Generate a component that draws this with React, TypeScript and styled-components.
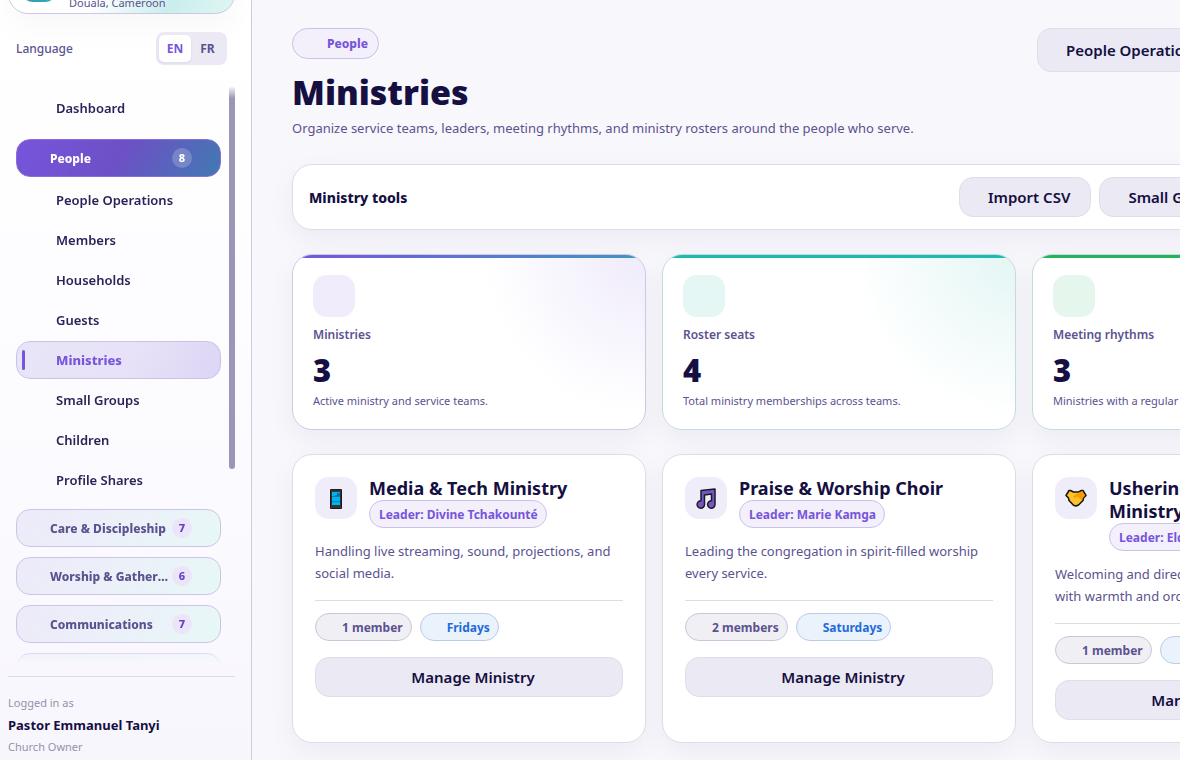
import React from "react";
import styled, { createGlobalStyle, css } from "styled-components";

const ink = "#150f42";
const body = "#5b5290";
const violet = "#7755dc";
const line = "#dfdcea";

const Global = createGlobalStyle`
  *, *::before, *::after { box-sizing: border-box; }
  body {
    margin: 0;
    background: #f8f7fc;
    color: ${ink};
    font-family: "Noto Sans", "Open Sans", sans-serif;
  }
  button { font-family: inherit; color: inherit; cursor: pointer; }
  a { color: inherit; text-decoration: none; }
  h1, h2, h3, p, ul { margin: 0; padding: 0; }
  ul { list-style: none; }
`;

const Shell = styled.div`
  display: flex;
  height: 100vh;
  overflow: hidden;
`;

/* ---------- Sidebar ---------- */

const Sidebar = styled.aside`
  flex: 0 0 252px;
  display: flex;
  flex-direction: column;
  height: 100vh;
  overflow: hidden;
  padding: 0 16px 0 8px;
  border-right: 1px solid #d0ccdd;
  background: linear-gradient(180deg, #ffffff 0%, #fdfdff 40%, #f8f6fd 100%);
`;

const Church = styled.div`
  flex: none;
  display: flex;
  align-items: center;
  gap: 12px;
  height: 80px;
  margin-top: -66px;
  padding: 0 12px;
  border: 1px solid #cdc7e2;
  border-radius: 20px;
  background: linear-gradient(120deg, #ffffff 45%, #c9eeec 75%, #e0f6f3 100%);
  box-shadow: 0 12px 28px rgba(30, 20, 80, 0.03);
`;

const ChurchMark = styled.span`
  flex: none;
  width: 36px;
  height: 56px;
  border-radius: 12px;
  background: linear-gradient(135deg, #7755dc, #1eb8ae);
`;

const ChurchText = styled.div`
  display: flex;
  flex-direction: column;
  align-self: flex-end;
  font-size: 11px;
  line-height: 16px;
  padding-bottom: 2px;
  color: ${body};
`;

const LanguageRow = styled.div`
  flex: none;
  display: flex;
  align-items: center;
  justify-content: space-between;
  margin-top: 18px;
  padding: 0 8px;
  font-size: 12px;
  font-weight: 500;
  color: ${body};
`;

const Switcher = styled.div`
  display: flex;
  padding: 3px;
  border-radius: 8px;
  background: #ece9f4;
`;

const SwitchButton = styled.button<{ $on?: boolean }>`
  width: ${(p) => (p.$on ? 32 : 33)}px;
  height: 27px;
  padding: 0;
  border: 0;
  border-radius: 5px;
  font-size: 12px;
  font-weight: 700;
  color: ${(p) => (p.$on ? violet : body)};
  background: ${(p) => (p.$on ? "#fff" : "transparent")};
  box-shadow: ${(p) => (p.$on ? "0 1px 3px rgba(30, 20, 80, 0.08)" : "none")};
`;

const NavFrame = styled.nav`
  flex: 1 1 0;
  min-height: 0;
  display: flex;
  margin-top: 21px;
  overflow: hidden;
  mask-image: linear-gradient(180deg, transparent 0, #000 12px, #000 calc(100% - 18px), transparent 100%);
`;

const NavList = styled.ul`
  flex: 1 1 0;
  min-width: 0;
  display: flex;
  flex-direction: column;
  gap: 2px;
  padding: 3px 8px 0;
`;

const Thumb = styled.div`
  flex: 0 0 6px;
  height: 383px;
  border-radius: 3px;
  background: #9b96b8;
`;

const NavLink = styled.a<{ $active?: boolean }>`
  display: flex;
  align-items: center;
  height: 38px;
  padding-left: 40px;
  border-radius: 14px;
  font-size: 13px;
  font-weight: 600;
  color: #2b2358;
  ${(p) =>
    p.$active &&
    css`
      gap: 31px;
      padding-left: 5px;
      border: 1px solid #cbc2ec;
      font-weight: 800;
      color: ${violet};
      background: linear-gradient(120deg, #e9e5f8 0%, #e7e2f7 55%, #dcd5f5 100%);
      &::before {
        content: "";
        width: 3px;
        height: 20px;
        border-radius: 2px;
        background: ${violet};
      }
    `}
`;

const GroupItem = styled.li<{ $top: number; $bottom: number }>`
  padding: ${(p) => p.$top}px 0 ${(p) => p.$bottom}px;
`;

const GroupButton = styled.button<{ $open?: boolean }>`
  display: flex;
  align-items: center;
  width: 100%;
  height: 38px;
  gap: 2px;
  padding: 0 28px 0 33px;
  border: 1px solid ${(p) => (p.$open ? "#8a6fdc" : "#cbc4e8")};
  border-radius: 14px;
  font-size: 12px;
  font-weight: 800;
  text-align: left;
  color: ${(p) => (p.$open ? "#fff" : body)};
  background: ${(p) =>
    p.$open
      ? "linear-gradient(120deg, #7755dc 0%, #6d50c6 50%, #4279b2 100%)"
      : "linear-gradient(120deg, #edeaf9 0%, #ebf1f9 55%, #e7f8f6 100%)"};
`;

const GroupName = styled.span`
  flex: 1;
  min-width: 0;
  overflow: hidden;
  white-space: nowrap;
  text-overflow: ellipsis;
`;

const Count = styled.span<{ $open?: boolean }>`
  flex: none;
  width: 20px;
  border-radius: 10px;
  font-size: 11px;
  line-height: 20px;
  text-align: center;
  color: ${(p) => (p.$open ? "#fff" : "#6443c4")};
  background: ${(p) => (p.$open ? "rgba(255, 255, 255, 0.2)" : "#ece5f9")};
`;

const Account = styled.footer`
  flex: none;
  display: flex;
  flex-direction: column;
  margin-top: 12px;
  padding: 15px 0 2px;
  border-top: 1px solid ${line};
  font-size: 11px;
  line-height: 22px;
  color: #9691ac;
  strong {
    font-size: 13px;
    font-weight: 700;
    color: ${ink};
  }
`;

/* ---------- Main ---------- */

const Main = styled.main`
  flex: 1 0 1174px;
  padding: 28px 40px;
`;

const Header = styled.header`
  display: flex;
  justify-content: space-between;
  align-items: flex-start;
  margin-bottom: 25px;
`;

const Actions = styled.div<{ $basis: number }>`
  flex: 0 0 ${(p) => p.$basis}px;
  display: flex;
  gap: 8px;
`;

const Eyebrow = styled.span`
  display: inline-flex;
  align-items: center;
  height: 31px;
  padding: 0 10px 0 34px;
  border: 1px solid #cbc2ec;
  border-radius: 16px;
  font-size: 12px;
  font-weight: 800;
  color: ${violet};
  background: #f3effb;
`;

const Title = styled.h1`
  margin-top: 13px;
  font-size: 34px;
  font-weight: 900;
  line-height: 40px;
`;

const Lead = styled.p`
  margin-top: 5px;
  font-size: 13px;
  line-height: 22px;
  color: ${body};
`;

const SoftButton = styled.button<{ $tall?: boolean; $wide?: boolean }>`
  display: flex;
  align-items: center;
  justify-content: center;
  width: ${(p) => (p.$wide ? "100%" : "auto")};
  height: ${(p) => (p.$tall ? 44 : 40)}px;
  padding: 0 20px 0 28px;
  border: 1px solid #e0dde9;
  border-radius: 14px;
  font-size: 15px;
  font-weight: 600;
  white-space: nowrap;
  background: #ebe9f3;
`;

const panel = css`
  border: 1px solid ${line};
  border-radius: 20px;
  background: #fff;
  box-shadow: 0 10px 28px rgba(30, 20, 80, 0.05);
`;

const Toolbar = styled.section`
  ${panel}
  display: flex;
  align-items: center;
  justify-content: space-between;
  margin-bottom: 24px;
  padding: 12px 16px;
  h2 {
    font-size: 14px;
    font-weight: 800;
  }
`;

const Grid = styled.div`
  display: grid;
  grid-template-columns: repeat(3, minmax(0, 1fr));
  gap: 16px;
  margin-bottom: 24px;
`;

const Stat = styled.section<{ $edge: string; $bar: string; $glow: string }>`
  ${panel}
  position: relative;
  overflow: hidden;
  height: 176px;
  padding: 20px;
  border-color: ${(p) => p.$edge};
  background: radial-gradient(circle at 100% 0%, ${(p) => p.$glow} 0%, #fff 160px);
  &::before {
    content: "";
    position: absolute;
    inset: 0 0 auto;
    height: 3px;
    background: ${(p) => p.$bar};
  }
`;

const Tile = styled.span<{ $tint?: string }>`
  flex: none;
  display: flex;
  align-items: center;
  justify-content: center;
  width: 42px;
  height: 42px;
  border-radius: 14px;
  background: ${(p) => p.$tint || "#f0edfb"};
`;

const StatLabel = styled.h2`
  margin-top: 8px;
  font-size: 12px;
  font-weight: 600;
  line-height: 20px;
  color: ${body};
`;

const StatValue = styled.p`
  margin-top: 7px;
  font-size: 31px;
  font-weight: 900;
  line-height: 36px;
`;

const StatNote = styled.p`
  margin-top: 3px;
  font-size: 11px;
  line-height: 20px;
  color: ${body};
`;

const Card = styled.article`
  ${panel}
  padding: 22px;
`;

const CardHead = styled.div`
  display: flex;
  gap: 12px;
  h3 {
    font-size: 18px;
    font-weight: 700;
    line-height: 23px;
  }
`;

const tones = {
  violet: ["#cbc2ec", "#f3effb", violet],
  grey: ["#cac6da", "#f0eff4", body],
  blue: ["#bacbe8", "#eaf2fc", "#1f6bdb"],
};

const Pill = styled.span<{ $tone: keyof typeof tones; $inset?: boolean }>`
  display: inline-flex;
  align-items: center;
  height: 28px;
  padding: 0 8px 0 ${(p) => (p.$inset ? 26 : 9)}px;
  border: 1px solid ${(p) => tones[p.$tone][0]};
  border-radius: 14px;
  font-size: 12px;
  font-weight: 700;
  white-space: nowrap;
  vertical-align: top;
  color: ${(p) => tones[p.$tone][2]};
  background: ${(p) => tones[p.$tone][1]};
`;

const CardText = styled.p`
  margin: 12px 0 16px;
  font-size: 13px;
  line-height: 22px;
  color: ${body};
`;

const Meta = styled.div`
  display: flex;
  gap: 8px;
  margin-bottom: 16px;
  padding-top: 12px;
  border-top: 1px solid ${line};
`;

const PhoneIcon = () => (
  <svg width="22" height="22" viewBox="0 0 22 22" aria-hidden="true">
    <rect x="5" y="2" width="12" height="20" rx="1" fill="#1a1a1c" />
    <rect x="6" y="3" width="10" height="18" fill="#333338" />
    <rect x="7" y="5" width="8" height="13" fill="#00b4f0" />
    <path d="M7 9.500h8M7 14.500h8" stroke="#0b7fb2" strokeWidth="1" />
    <path d="M12 6h3v3h-3zM10 8h2v2h-2z" fill="#0b6f9c" />
  </svg>
);

const MusicIcon = () => (
  <svg width="22" height="22" viewBox="0 0 22 22" aria-hidden="true">
    <path
      d="M6 3.500 20 2v15.500a3.700 3.700 0 1 1-3.500-3.700V7L9.500 8v9.500a3.700 3.700 0 1 1-3.500-3.700z"
      fill="#7556c4"
      stroke="#1d1a26"
      strokeWidth="1.500"
      strokeLinejoin="round"
    />
  </svg>
);

const HandshakeIcon = () => (
  <svg width="22" height="22" viewBox="0 0 22 22" aria-hidden="true">
    <path
      d="M5.500 3.500 8.500 5h5l3-1.500h1.500L21 8.500l-2.500 2.500-.5 2.500-4.500 4.500-2.500 1-2.500-.8L4 13.500l-.5-2.500L1 8.500 4 3.500z"
      fill="#ffc02e"
      stroke="#17130a"
      strokeWidth="1.500"
      strokeLinejoin="round"
    />
    <path d="m14 5.500 3-1.300 3 4.300-2 2.300-1.500 2.200-4-3.500-2.500 1.500L8 9.500z" fill="#f59d00" />
  </svg>
);

const people = ["People Operations", "Members", "Households", "Guests", "Ministries", "Small Groups", "Children", "Profile Shares"];

const groups = [
  { name: "Care & Discipleship", count: 7 },
  { name: "Worship & Gatherings", count: 6 },
  { name: "Communications", count: 7 },
  { name: "Finance", count: 5 },
];

const stats = [
  {
    label: "Ministries", value: 3, note: "Active ministry and service teams.",
    tint: "#f0ecfb", glow: "#efebfb", edge: "#cfc9e8", bar: "linear-gradient(90deg, #7755dc, #3f97c0)",
  },
  {
    label: "Roster seats", value: 4, note: "Total ministry memberships across teams.",
    tint: "#e4f7f5", glow: "#e3f6f4", edge: "#c3dce2", bar: "#1dbbae",
  },
  {
    label: "Meeting rhythms", value: 3, note: "Ministries with a regular meeting day.",
    tint: "#e5f6ec", glow: "#e4f6eb", edge: "#c5dcd8", bar: "#20b55c",
  },
];

const ministries = [
  {
    name: "Media & Tech Ministry", leader: "Divine Tchakounté", icon: <PhoneIcon />, members: "1 member", day: "Fridays",
    text: "Handling live streaming, sound, projections, and social media.",
  },
  {
    name: "Praise & Worship Choir", leader: "Marie Kamga", icon: <MusicIcon />, members: "2 members", day: "Saturdays",
    text: "Leading the congregation in spirit-filled worship every service.",
  },
  {
    name: "Ushering & Hospitality Ministry", leader: "Elder Samuel", icon: <HandshakeIcon />, members: "1 member", day: "Sundays",
    text: "Welcoming and directing the whole congregation with warmth and order.",
  },
];

export default function App() {
  return (
    <Shell>
      <Global />
      <Sidebar>
        <Church>
          <ChurchMark />
          <ChurchText>Douala, Cameroon</ChurchText>
        </Church>
        <LanguageRow>
          <span id="language">Language</span>
          <Switcher role="group" aria-labelledby="language">
            <SwitchButton $on>EN</SwitchButton>
            <SwitchButton>FR</SwitchButton>
          </Switcher>
        </LanguageRow>
        <NavFrame>
          <NavList>
            <li><NavLink href="#dashboard">Dashboard</NavLink></li>
            <GroupItem $top={10} $bottom={2}>
              <GroupButton $open aria-expanded="true">
                <GroupName>People</GroupName>
                <Count $open>8</Count>
              </GroupButton>
            </GroupItem>
            {people.map((name) => (
              <li key={name}>
                <NavLink href={"#" + name.toLowerCase().replace(" ", "-")} $active={name === "Ministries"}>
                  {name}
                </NavLink>
              </li>
            ))}
            {groups.map((g) => (
              <GroupItem key={g.name} $top={8} $bottom={0}>
                <GroupButton aria-expanded="false">
                  <GroupName>{g.name}</GroupName>
                  <Count>{g.count}</Count>
                </GroupButton>
              </GroupItem>
            ))}
          </NavList>
          <Thumb />
        </NavFrame>
        <Account>
          <span>Logged in as</span>
          <strong>Pastor Emmanuel Tanyi</strong>
          <span>Church Owner</span>
        </Account>
      </Sidebar>

      <Main>
        <Header>
          <div>
            <Eyebrow>People</Eyebrow>
            <Title>Ministries</Title>
            <Lead>Organize service teams, leaders, meeting rhythms, and ministry rosters around the people who serve.</Lead>
          </div>
          <Actions $basis={349}>
            <SoftButton $tall>People Operations</SoftButton>
          </Actions>
        </Header>

        <Toolbar>
          <h2>Ministry tools</h2>
          <Actions $basis={410}>
            <SoftButton>Import CSV</SoftButton>
            <SoftButton>Small Groups</SoftButton>
          </Actions>
        </Toolbar>

        <Grid>
          {stats.map((s) => (
            <Stat key={s.label} $edge={s.edge} $bar={s.bar} $glow={s.glow}>
              <Tile $tint={s.tint} />
              <StatLabel>{s.label}</StatLabel>
              <StatValue>{s.value}</StatValue>
              <StatNote>{s.note}</StatNote>
            </Stat>
          ))}
        </Grid>

        <Grid>
          {ministries.map((m) => (
            <Card key={m.name}>
              <CardHead>
                <Tile>{m.icon}</Tile>
                <div>
                  <h3>{m.name}</h3>
                  <Pill $tone="violet">Leader: {m.leader}</Pill>
                </div>
              </CardHead>
              <CardText>{m.text}</CardText>
              <Meta>
                <Pill $tone="grey" $inset>{m.members}</Pill>
                <Pill $tone="blue" $inset>{m.day}</Pill>
              </Meta>
              <SoftButton $wide>Manage Ministry</SoftButton>
            </Card>
          ))}
        </Grid>
      </Main>
    </Shell>
  );
}
